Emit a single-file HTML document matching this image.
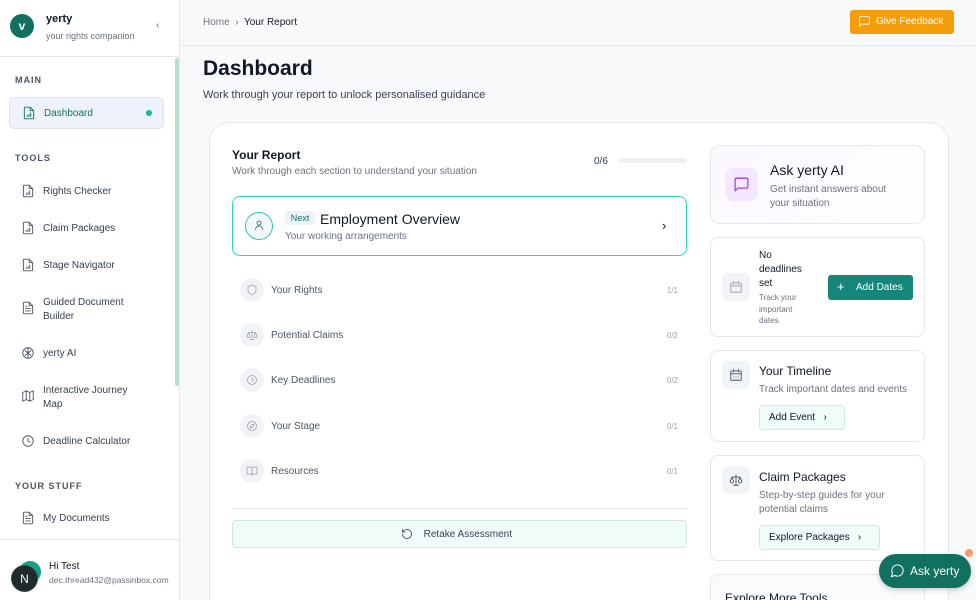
<!DOCTYPE html>
<html style="width:976px;height:600px;overflow:hidden"><head><meta charset="utf-8"><style>
*{box-sizing:border-box;margin:0;padding:0}
body{width:976px;height:600px;overflow:hidden;font-family:"Liberation Sans",sans-serif;background:#f8f9fb;position:relative;color:#111827}
.a{position:absolute}
.sb{left:0;top:0;width:180px;height:600px;background:#fff;border-right:1px solid #e5e7eb}
.sec{font-size:9px;letter-spacing:1px;color:#4b5563;font-weight:bold}
.ni{font-size:10px;color:#374151;line-height:14px}
.ic{width:14px;height:14px;fill:none;stroke:#4b5563;stroke-width:1.6;stroke-linecap:round;stroke-linejoin:round}
.card{background:#fff;border:1px solid #e5e7eb;border-radius:8px}
.row{left:240px;width:440px;height:24px}
.row .c{position:absolute;left:0;top:0;width:24px;height:24px;border-radius:12px;background:#f1f3f6}
.row .t{position:absolute;left:31px;top:7px;font-size:10px;color:#4b5563}
.row .n{position:absolute;right:2px;top:8px;font-size:8px;color:#9ca3af}
.sq{width:28px;height:28px;border-radius:6px;background:#f1f4f8}
.btn2{background:#effcfa;border:1px solid #cde9e4;border-radius:4px;font-size:10px;color:#111827}
</style></head><body>
<div class="a sb">
 <div class="a" style="left:10px;top:14px;width:24px;height:24px;border-radius:12px;background:#12705f;color:#fff;font-weight:bold;font-size:12px;text-align:center;line-height:24px">v</div>
 <div class="a" style="left:46px;top:13px;font-size:11px;font-weight:bold">yerty</div>
 <div class="a" style="left:46px;top:31px;font-size:9px;color:#6b7280">your rights companion</div>
 <div class="a" style="left:156px;top:20px;font-size:10px;color:#6b7280">‹</div>
 <div class="a" style="left:0;top:56px;width:179px;border-top:1px solid #e5e7eb"></div>
 <div class="a" style="left:175px;top:58px;width:4px;height:328px;background:#b9dcd5;border-radius:2px"></div>
 <div class="a sec" style="left:15px;top:75px">MAIN</div>
 <div class="a" style="left:9px;top:97px;width:155px;height:32px;background:#eef2fc;border:1px solid #dde3f0;border-radius:5px"></div>
 <svg class="a ic" style="left:22px;top:106px;stroke:#12705f" viewBox="0 0 24 24"><path d="M14 2H6a2 2 0 0 0-2 2v16a2 2 0 0 0 2 2h12a2 2 0 0 0 2-2V8z M14 2v6h6 M9 18v-2 M12 18v-4 M15 18v-6"/></svg>
 <div class="a ni" style="left:44px;top:107px;color:#12705f">Dashboard</div>
 <div class="a" style="left:146px;top:110px;width:6px;height:6px;border-radius:3px;background:#14b89a"></div>
 <div class="a sec" style="left:15px;top:153px">TOOLS</div>
 <svg class="a ic" style="left:21px;top:184px" viewBox="0 0 24 24"><path d="M14 2H6a2 2 0 0 0-2 2v16a2 2 0 0 0 2 2h12a2 2 0 0 0 2-2V8z M14 2v6h6 M9 18v-2 M12 18v-4 M15 18v-6"/></svg>
 <div class="a ni" style="left:43px;top:185px">Rights Checker</div>
 <svg class="a ic" style="left:21px;top:221px" viewBox="0 0 24 24"><path d="M14 2H6a2 2 0 0 0-2 2v16a2 2 0 0 0 2 2h12a2 2 0 0 0 2-2V8z M14 2v6h6 M9 18v-2 M12 18v-4 M15 18v-6"/></svg>
 <div class="a ni" style="left:43px;top:222px">Claim Packages</div>
 <svg class="a ic" style="left:21px;top:258px" viewBox="0 0 24 24"><path d="M14 2H6a2 2 0 0 0-2 2v16a2 2 0 0 0 2 2h12a2 2 0 0 0 2-2V8z M14 2v6h6 M9 18v-2 M12 18v-4 M15 18v-6"/></svg>
 <div class="a ni" style="left:43px;top:259px">Stage Navigator</div>
 <svg class="a ic" style="left:21px;top:301px" viewBox="0 0 24 24"><path d="M14 2H6a2 2 0 0 0-2 2v16a2 2 0 0 0 2 2h12a2 2 0 0 0 2-2V8z M14 2v6h6 M8 13h8 M8 17h8 M8 9h2"/></svg>
 <div class="a ni" style="left:43px;top:296px">Guided Document<br>Builder</div>
 <svg class="a ic" style="left:21px;top:346px" viewBox="0 0 24 24"><circle cx="12" cy="12" r="9"/><path d="M12 3v18 M7 8l5 4 5-4 M7 16l5-4 5 4"/></svg>
 <div class="a ni" style="left:43px;top:347px">yerty AI</div>
 <svg class="a ic" style="left:21px;top:389px" viewBox="0 0 24 24"><path d="M3 6l6-3 6 3 6-3v15l-6 3-6-3-6 3z M9 3v15 M15 6v15"/></svg>
 <div class="a ni" style="left:43px;top:384px">Interactive Journey<br>Map</div>
 <svg class="a ic" style="left:21px;top:434px" viewBox="0 0 24 24"><circle cx="12" cy="12" r="9"/><path d="M12 7v5l3 2"/></svg>
 <div class="a ni" style="left:43px;top:435px">Deadline Calculator</div>
 <div class="a sec" style="left:15px;top:481px">YOUR STUFF</div>
 <svg class="a ic" style="left:21px;top:511px" viewBox="0 0 24 24"><path d="M14 2H6a2 2 0 0 0-2 2v16a2 2 0 0 0 2 2h12a2 2 0 0 0 2-2V8z M14 2v6h6 M8 13h8 M8 17h8 M8 9h2"/></svg>
 <div class="a ni" style="left:43px;top:512px">My Documents</div>
 <div class="a" style="left:0;top:539px;width:179px;border-top:1px solid #e5e7eb"></div>
 <div class="a" style="left:19px;top:561px;width:22px;height:22px;border-radius:11px;background:#14a085"></div>
 <div class="a" style="left:11px;top:565px;width:27px;height:27px;border-radius:14px;background:#1f2a2a;color:#fff;font-size:12px;text-align:center;line-height:27px;border:1px solid #444">N</div>
 <div class="a" style="left:49px;top:561px;font-size:10px">Hi Test</div>
 <div class="a" style="left:49px;top:575px;font-size:8.5px;color:#6b7280">dec.thread432@passinbox.com</div>
</div>
<div class="a" style="left:180px;top:0;width:796px;height:46px;background:#f9fafb;border-bottom:1px solid #e5e7eb"></div>
<div class="a" style="left:203px;top:17px;font-size:10px;color:#6b7280">Home &nbsp;<span style="color:#6b7280">›</span>&nbsp; <span style="color:#111827">Your Report</span></div>
<div class="a" style="left:850px;top:10px;width:104px;height:24px;background:#f59e0b;border-radius:3px;color:#fff;font-size:10px;line-height:24px;padding-left:26px">Give Feedback</div>
<svg class="a ic" style="left:858px;top:15px;stroke:#fff;width:13px;height:13px" viewBox="0 0 24 24"><path d="M21 15a2 2 0 0 1-2 2H7l-4 4V5a2 2 0 0 1 2-2h14a2 2 0 0 1 2 2z"/></svg>
<div class="a" style="left:203px;top:57px;font-size:21px;font-weight:bold">Dashboard</div>
<div class="a" style="left:203px;top:89px;font-size:11px;color:#374151">Work through your report to unlock personalised guidance</div>
<div class="a" style="left:209px;top:122px;width:740px;height:478px;background:#fff;border:1px solid #e5e7eb;border-bottom:none;border-radius:20px 20px 0 0"></div>
<div class="a" style="left:232px;top:148px;font-size:12px;font-weight:bold">Your Report</div>
<div class="a" style="left:232px;top:166px;font-size:10px;color:#6b7280">Work through each section to understand your situation</div>
<div class="a" style="left:594px;top:156px;font-size:10px;color:#374151">0/6</div>
<div class="a" style="left:618px;top:158px;width:69px;height:5px;border-radius:3px;background:#eef0f4"></div>
<div class="a" style="left:232px;top:196px;width:455px;height:60px;border:1.5px solid #2dd4bf;border-radius:8px;background:#fff"></div>
<div class="a" style="left:245px;top:212px;width:28px;height:28px;border-radius:14px;border:1.5px solid #2cc9ad;background:#f3f6fb"></div>
<svg class="a ic" style="left:253px;top:219px;width:12px;height:12px;stroke:#12705f" viewBox="0 0 24 24"><circle cx="12" cy="8" r="4"/><path d="M5 21a7 7 0 0 1 14 0"/></svg>
<div class="a" style="left:285px;top:211px;width:30px;height:14px;background:#eef3fb;border-radius:3px;font-size:9px;color:#12705f;text-align:center;line-height:14px">Next</div>
<div class="a" style="left:320px;top:211px;font-size:14px">Employment Overview</div>
<div class="a" style="left:285px;top:231px;font-size:10px;color:#6b7280">Your working arrangements</div>
<div class="a" style="left:662px;top:218px;font-size:13px;color:#111827">›</div>
<div class="a row" style="top:278px"><div class="c"></div><div class="t">Your Rights</div><div class="n">1/1</div></div>
<div class="a row" style="top:323px"><div class="c"></div><div class="t">Potential Claims</div><div class="n">0/2</div></div>
<div class="a row" style="top:368px"><div class="c"></div><div class="t">Key Deadlines</div><div class="n">0/2</div></div>
<div class="a row" style="top:414px"><div class="c"></div><div class="t">Your Stage</div><div class="n">0/1</div></div>
<div class="a row" style="top:459px"><div class="c"></div><div class="t">Resources</div><div class="n">0/1</div></div>
<svg class="a ic" style="left:246px;top:284px;width:12px;height:12px;stroke:#9ca3af" viewBox="0 0 24 24"><path d="M12 22s8-4 8-10V5l-8-3-8 3v7c0 6 8 10 8 10z"/></svg>
<svg class="a ic" style="left:246px;top:329px;width:12px;height:12px;stroke:#9ca3af" viewBox="0 0 24 24"><path d="M12 3v18 M5 7h14 M5 7l-3 7a3 3 0 0 0 6 0z M19 7l-3 7a3 3 0 0 0 6 0z M8 21h8"/></svg>
<svg class="a ic" style="left:246px;top:374px;width:12px;height:12px;stroke:#9ca3af" viewBox="0 0 24 24"><circle cx="12" cy="12" r="9"/><path d="M12 7v5l3 2"/></svg>
<svg class="a ic" style="left:246px;top:420px;width:12px;height:12px;stroke:#9ca3af" viewBox="0 0 24 24"><circle cx="12" cy="12" r="9"/><path d="M16 8l-2 6-6 2 2-6z"/></svg>
<svg class="a ic" style="left:246px;top:465px;width:12px;height:12px;stroke:#9ca3af" viewBox="0 0 24 24"><path d="M2 4h6a4 4 0 0 1 4 4v13a3 3 0 0 0-3-3H2z M22 4h-6a4 4 0 0 0-4 4v13a3 3 0 0 1 3-3h7z"/></svg>
<div class="a" style="left:232px;top:508px;width:455px;border-top:1px solid #e5e7eb"></div>
<div class="a" style="left:232px;top:520px;width:455px;height:28px;background:#effcfa;border:1px solid #cfe9e3;border-radius:4px;font-size:10px;color:#374151;text-align:center;line-height:27px">&nbsp;&nbsp;&nbsp;&nbsp;&nbsp;&nbsp;Retake Assessment</div>
<svg class="a ic" style="left:401px;top:528px;width:12px;height:12px;stroke:#374151" viewBox="0 0 24 24"><path d="M3 12a9 9 0 1 0 3-6.7L3 8 M3 3v5h5"/></svg>
<div class="a card" style="left:710px;top:145px;width:215px;height:79px;background:linear-gradient(135deg,#fbf7ff,#fff);border-radius:10px"></div>
<div class="a" style="left:725px;top:168px;width:33px;height:33px;border-radius:8px;background:#f3e8ff"></div>
<svg class="a ic" style="left:733px;top:176px;width:17px;height:17px;stroke:#9333ea" viewBox="0 0 24 24"><path d="M21 15a2 2 0 0 1-2 2H7l-4 4V5a2 2 0 0 1 2-2h14a2 2 0 0 1 2 2z"/></svg>
<div class="a" style="left:770px;top:162px;font-size:14px">Ask yerty AI</div>
<div class="a" style="left:770px;top:183px;font-size:10px;color:#6b7280;line-height:14px">Get instant answers about<br>your situation</div>
<div class="a card" style="left:710px;top:237px;width:215px;height:100px"></div>
<div class="a sq" style="left:722px;top:273px"></div>
<svg class="a ic" style="left:729px;top:280px;stroke:#9ca3af" viewBox="0 0 24 24"><rect x="3" y="5" width="18" height="16" rx="2"/><path d="M3 10h18 M8 3v4 M16 3v4"/></svg>
<div class="a" style="left:759px;top:249px;font-size:10px;line-height:14px">No<br>deadlines<br>set</div>
<div class="a" style="left:759px;top:292px;font-size:8px;color:#6b7280;line-height:11.5px">Track your<br>important<br>dates</div>
<div class="a" style="left:828px;top:275px;width:85px;height:25px;background:#14877a;border-radius:3px;color:#fff;font-size:10px;line-height:25px;padding-left:28px">Add Dates</div>
<div class="a" style="left:837px;top:279px;color:#fff;font-size:13px">+</div>
<div class="a card" style="left:710px;top:350px;width:215px;height:92px"></div>
<div class="a sq" style="left:722px;top:361px"></div>
<svg class="a ic" style="left:729px;top:368px;stroke:#4b5563" viewBox="0 0 24 24"><rect x="3" y="5" width="18" height="16" rx="2"/><path d="M3 10h18 M8 3v4 M16 3v4 M8 14h.01 M12 14h.01 M16 14h.01 M8 17h.01 M12 17h.01 M16 17h.01"/></svg>
<div class="a" style="left:759px;top:364px;font-size:12px">Your Timeline</div>
<div class="a" style="left:759px;top:384px;font-size:10px;color:#6b7280">Track important dates and events</div>
<div class="a btn2" style="left:759px;top:405px;width:86px;height:25px;line-height:24px;padding-left:9px">Add Event &nbsp;&nbsp;›</div>
<div class="a card" style="left:710px;top:455px;width:215px;height:106px"></div>
<div class="a sq" style="left:722px;top:466px"></div>
<svg class="a ic" style="left:729px;top:473px;stroke:#4b5563" viewBox="0 0 24 24"><path d="M12 3v18 M5 7h14 M5 7l-3 7a3 3 0 0 0 6 0z M19 7l-3 7a3 3 0 0 0 6 0z M8 21h8"/></svg>
<div class="a" style="left:759px;top:470px;font-size:12px">Claim Packages</div>
<div class="a" style="left:759px;top:489px;font-size:10px;color:#6b7280;line-height:14px">Step-by-step guides for your<br>potential claims</div>
<div class="a btn2" style="left:759px;top:525px;width:121px;height:25px;line-height:24px;padding-left:9px">Explore Packages &nbsp;&nbsp;›</div>
<div class="a card" style="left:710px;top:574px;width:215px;height:26px;background:#fafbfc;border-bottom:none;border-radius:8px 8px 0 0;overflow:hidden"><div style="position:absolute;left:14px;top:16px;font-size:12px;white-space:nowrap">Explore More Tools</div></div>
<div class="a" style="left:879px;top:554px;width:92px;height:34px;border-radius:17px;background:#12705f;color:#fff;font-size:12px;line-height:34px;padding-left:31px;box-shadow:0 2px 6px rgba(0,0,0,.2)">Ask yerty</div>
<svg class="a ic" style="left:890px;top:563px;width:15px;height:15px;stroke:#fff" viewBox="0 0 24 24"><path d="M7.9 20A9 9 0 1 0 4 16.1L2 22z"/></svg>
<div class="a" style="left:965px;top:549px;width:8px;height:8px;border-radius:4px;background:#f59e6b"></div>
</body></html>
